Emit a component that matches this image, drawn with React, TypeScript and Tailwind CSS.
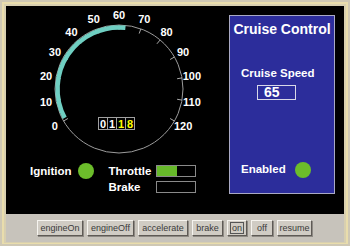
const CX = 119
const CY = 89
const LABELS = [0, 10, 20, 30, 40, 50, 60, 70, 80, 90, 100, 110, 120]

function pt(v: number, r: number) {
  const a = ((-120 + 2 * v) * Math.PI) / 180
  return { x: CX + r * Math.sin(a), y: CY - r * Math.cos(a) }
}

function Speedometer({ speed, odometer }: { speed: number; odometer: string }) {
  const s = pt(1, 61.5)
  const e = pt(speed, 61.5)
  return (
    <svg width="217" height="150" viewBox="6 6 217 150" className="block">
      <circle cx={CX} cy={CY} r="64" fill="none" stroke="#9c9c9c" strokeWidth="1" />
      {LABELS.map((v) => {
        const a = pt(v, 59)
        const b = pt(v, 64)
        return <line key={'t' + v} x1={a.x} y1={a.y} x2={b.x} y2={b.y} stroke="#a8a8a8" strokeWidth="1" />
      })}
      <path
        d={`M${s.x} ${s.y} A61.5 61.5 0 0 1 ${e.x} ${e.y}`}
        fill="none"
        stroke="#6fcfc2"
        strokeWidth="4.5"
      />
      {LABELS.map((v) => {
        const p = pt(v, 74)
        return (
          <text
            key={'l' + v}
            x={p.x}
            y={p.y}
            textAnchor="middle"
            dominantBaseline="central"
            fill="#ffffff"
            fontSize="11"
            fontWeight="bold"
            fontFamily="'Liberation Sans', Arial, sans-serif"
          >
            {v}
          </text>
        )
      })}
      {odometer.split('').map((d, i) => (
        <g key={'o' + i}>
          <rect x={98.5 + i * 9} y={117.5} width="9" height="12" fill="#000" stroke="#a0a0a0" strokeWidth="1" />
          <text
            x={103 + i * 9}
            y={124}
            textAnchor="middle"
            dominantBaseline="central"
            fill={i < 2 ? '#ffffff' : '#ffff00'}
            fontSize="11"
            fontWeight="bold"
            fontFamily="'Liberation Sans', Arial, sans-serif"
          >
            {d}
          </text>
        </g>
      ))}
    </svg>
  )
}

function Lamp() {
  return <span className="block w-[16px] h-[16px] rounded-full bg-[#6cbd2b]" />
}

const BUTTONS = [
  { label: 'engineOn', w: 'w-[46px]' },
  { label: 'engineOff', w: 'w-[47px]' },
  { label: 'accelerate', w: 'w-[50px]' },
  { label: 'brake', w: 'w-[31px]' },
  { label: 'on', w: 'w-[20px]', focus: true },
  { label: 'off', w: 'w-[22px]' },
  { label: 'resume', w: 'w-[35px]' },
]

export default function App() {
  return (
    <div className="w-[350px] h-[246px] bg-[#cfc8b4] p-[2px] font-['Liberation_Sans',Arial,sans-serif]">
      <div className="h-full bg-[#e9ddac] pt-[2px] px-[2px] pb-[1px]">
        <div className="h-full border-t-[2px] border-x-[2px] border-b-[1px] border-[#d8cfb0] flex flex-col">
          <div className="h-[208px] bg-black flex">
            <div className="w-[223px] flex flex-col">
              <Speedometer speed={63} odometer="0118" />
              <div className="flex items-start pl-[24px] mt-[7px] text-white text-[11.5px] font-bold leading-[12px]">
                <div className="flex items-center h-[16px] gap-[6px]">
                  <span>Ignition</span>
                  <Lamp />
                </div>
                <div className="ml-[15px] mt-[2px] grid grid-cols-[47px_40px] gap-y-[4px]">
                  <span className="h-[12px] flex items-center">Throttle</span>
                  <div className="h-[12px] border border-[#8a8a8a] flex">
                    <div className="w-[20px] h-full bg-[#67b92a]" />
                  </div>
                  <span className="h-[12px] flex items-center">Brake</span>
                  <div className="h-[12px] border border-[#8a8a8a]" />
                </div>
              </div>
            </div>
            <div className="mt-[9px] w-[106px] h-[179px] bg-[#2c2d9b] border border-[#a9a9c4] flex flex-col text-white font-bold">
              <div className="pt-[5px] text-[14px] leading-[16px] text-center">Cruise Control</div>
              <div className="mt-[30px] ml-[11px] text-[11.5px] leading-[13px]">Cruise Speed</div>
              <div className="mt-[5px] ml-[27px] w-[39px] h-[15px] border border-[#d8d8e8] text-[14px] leading-[13px] pl-[6px]">
                65
              </div>
              <div className="mt-auto mb-[15px] ml-[11px] flex items-center h-[16px] text-[11.5px]">
                <span className="w-[54px]">Enabled</span>
                <Lamp />
              </div>
            </div>
          </div>
          <div className="flex-1 bg-[#c7c3bb] flex items-center justify-center gap-[4px] pr-[1px]">
            {BUTTONS.map((b) => (
              <button
                key={b.label}
                className={`${b.w} h-[16px] bg-[#d0ccc4] border border-t-[#f6f4ef] border-l-[#f6f4ef] border-b-[#5e5a55] border-r-[#5e5a55] shadow-[1px_1px_0_#8e8a84] text-[9px] leading-[12px] text-[#3a3a3a] flex items-center justify-center p-0`}
              >
                {b.focus ? <span className="border border-[#555] px-[1px] leading-[10px]">{b.label}</span> : b.label}
              </button>
            ))}
          </div>
        </div>
      </div>
    </div>
  )
}
